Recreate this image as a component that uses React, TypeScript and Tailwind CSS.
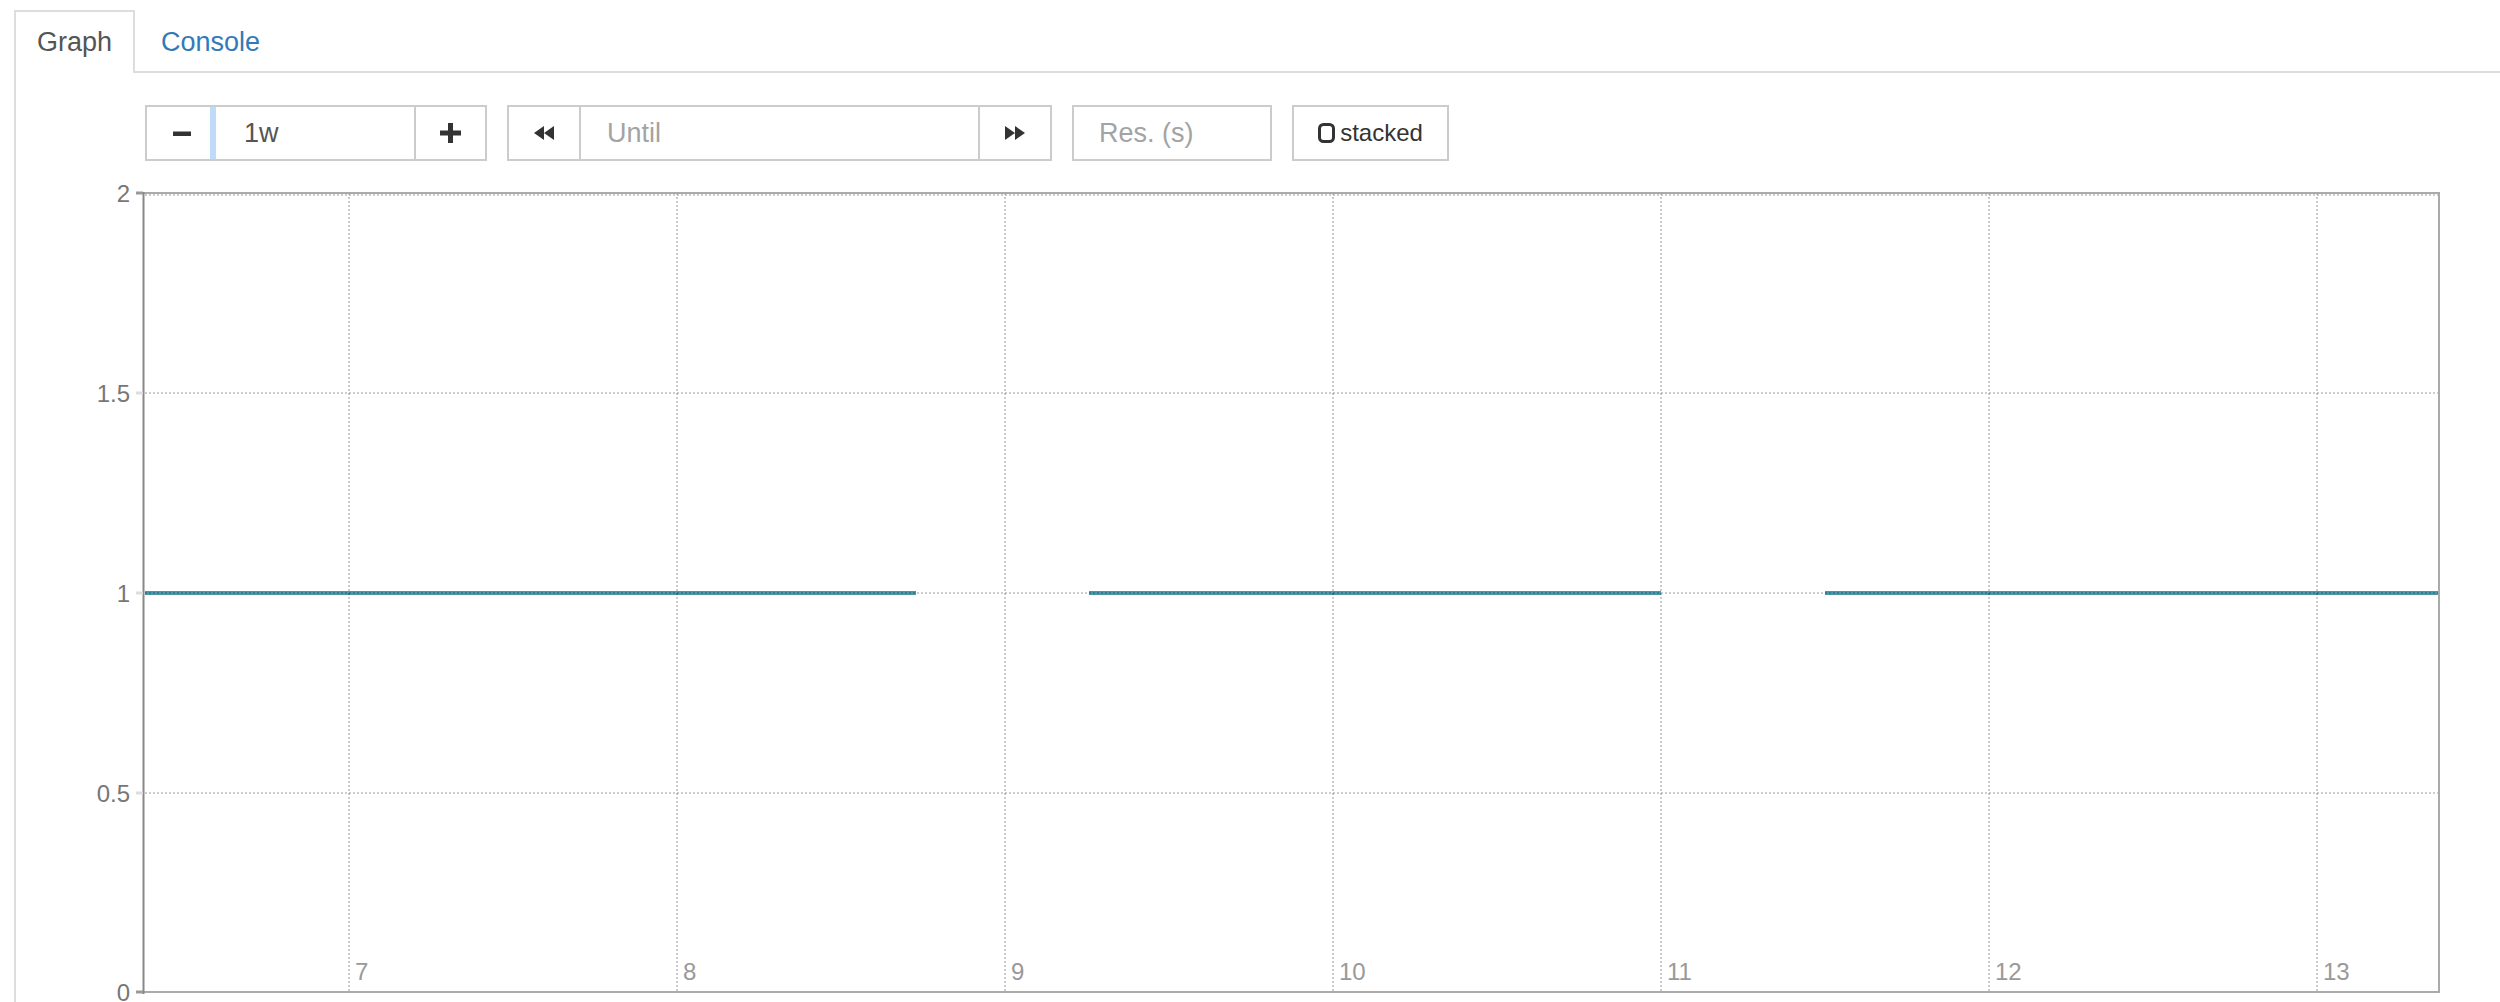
import React from "react";

const GRID_X = [351, 679, 1007, 1335, 1663, 1991, 2319];
const X_LABELS = ["7", "8", "9", "10", "11", "12", "13"];
const Y_TICKS: { y: number; label: string; strong: boolean }[] = [
  { y: 193, label: "2", strong: true },
  { y: 393, label: "1.5", strong: false },
  { y: 593, label: "1", strong: false },
  { y: 793, label: "0.5", strong: false },
  { y: 992, label: "0", strong: true },
];
const SEGMENTS: [number, number][] = [
  [147, 918],
  [1091, 1663],
  [1827, 2440],
];

function MinusIcon() {
  return (
    <svg width="18" height="5" viewBox="0 0 18 5">
      <rect x="0" y="0.5" width="18" height="4.5" fill="#333" />
    </svg>
  );
}

function PlusIcon() {
  return (
    <svg width="21" height="20" viewBox="0 0 21 20">
      <rect x="8" y="0" width="5" height="20" fill="#333" />
      <rect x="0" y="7.5" width="21" height="5" fill="#333" />
    </svg>
  );
}

function BackwardIcon() {
  return (
    <svg width="20" height="14" viewBox="0 0 20 14">
      <polygon points="0,7 10,0 10,14" fill="#333" />
      <polygon points="10,7 20,0 20,14" fill="#333" />
    </svg>
  );
}

function ForwardIcon() {
  return (
    <svg width="20" height="14" viewBox="0 0 20 14">
      <polygon points="0,0 10,7 0,14" fill="#333" />
      <polygon points="10,0 20,7 10,14" fill="#333" />
    </svg>
  );
}

function UncheckedIcon() {
  return (
    <svg width="17" height="20" viewBox="0 0 17 20">
      <rect x="1.5" y="1.5" width="14" height="17" rx="4" ry="4" fill="none" stroke="#333" strokeWidth="3" />
    </svg>
  );
}

function Chart() {
  const grid = "rgba(0,0,0,0.2)";
  return (
    <svg width="2484" height="822" viewBox="16 180 2484 822" className="block">
      {SEGMENTS.map(([a, b], i) => (
        <line key={i} x1={a} y1={593} x2={b} y2={593} stroke="#4c98aa" strokeWidth="4" />
      ))}
      {[195, 393, 593, 793].map((y) => (
        <line key={y} x1={147} y1={y} x2={2440} y2={y} stroke={grid} strokeWidth="2" strokeDasharray="2 2" />
      ))}
      {GRID_X.map((x) => (
        <line key={x} x1={x} y1={193} x2={x} y2={992} stroke={grid} strokeWidth="2" strokeDasharray="2 2" />
      ))}
      <line x1={145} y1={193} x2={2442} y2={193} stroke="#aaa" strokeWidth="2" />
      <line x1={2441} y1={192} x2={2441} y2={993} stroke="#aaa" strokeWidth="2" />
      <line x1={145} y1={992} x2={2442} y2={992} stroke="#aaa" strokeWidth="2" />
      <line x1={145.5} y1={192} x2={145.5} y2={994} stroke="#888" strokeWidth="2" />
      {Y_TICKS.map((t) => (
        <g key={t.label}>
          <line x1={138} y1={t.y} x2={145} y2={t.y} stroke={t.strong ? "#999" : "#ddd"} strokeWidth="3" />
          <text
            x={132}
            y={t.y + 8.5}
            textAnchor="end"
            fontSize="24"
            fill="#777"
            fontFamily="'Liberation Sans', Arial, sans-serif"
          >
            {t.label}
          </text>
        </g>
      ))}
      {GRID_X.map((x, i) => (
        <text
          key={x}
          x={x + 6}
          y={980}
          fontSize="24"
          fill="#999"
          fontFamily="'Liberation Sans', Arial, sans-serif"
        >
          {X_LABELS[i]}
        </text>
      ))}
    </svg>
  );
}

export default function App() {
  return (
    <div className="w-[2500px] h-[1002px] overflow-hidden bg-white pt-[10px] pl-[14px] font-['Liberation_Sans',Arial,sans-serif]">
      <div className="border-l-2 border-[#ddd] h-[992px] flex flex-col">
        <div className="flex h-[63px] shrink-0">
          <div className="h-full border-t-2 border-r-2 border-[#ddd] px-[21px] flex items-center text-[27px] leading-none text-[#555]">
            Graph
          </div>
          <div className="flex-1 h-full border-b-2 border-[#ddd] flex items-center pl-[26px] pt-[4px] text-[27px] leading-none text-[#337ab7]">
            Console
          </div>
        </div>

        <div className="mt-[32px] ml-[129px] flex gap-[20px] h-[56px] shrink-0">
          <div className="flex w-[342px] h-full border-2 border-[#ccc]">
            <div className="w-[63px] h-full flex items-center justify-center pl-[6px]">
              <MinusIcon />
            </div>
            <div className="w-[6px] h-full bg-[#bedcf6]" />
            <input
              readOnly
              value="1w"
              className="w-[198px] h-full pl-[28px] text-[27px] text-[#555] bg-transparent outline-none"
            />
            <div className="w-[71px] h-full border-l-2 border-[#ccc] flex items-center justify-center">
              <PlusIcon />
            </div>
          </div>

          <div className="flex w-[545px] h-full border-2 border-[#ccc]">
            <div className="w-[72px] h-full border-r-2 border-[#ccc] flex items-center justify-center">
              <BackwardIcon />
            </div>
            <input
              readOnly
              placeholder="Until"
              className="w-[397px] h-full pl-[26px] text-[27px] text-[#555] placeholder:text-[#a3a3a3] bg-transparent outline-none"
            />
            <div className="w-[72px] h-full border-l-2 border-[#ccc] flex items-center justify-center">
              <ForwardIcon />
            </div>
          </div>

          <input
            readOnly
            placeholder="Res. (s)"
            className="w-[200px] h-full border-2 border-[#ccc] pl-[25px] text-[27px] text-[#555] placeholder:text-[#a3a3a3] bg-white outline-none"
          />

          <div className="w-[157px] h-full border-2 border-[#ccc] flex items-center justify-center gap-[5px] text-[24px] text-[#333]">
            <UncheckedIcon />
            <span className="leading-none">stacked</span>
          </div>
        </div>

        <div className="mt-[19px] -ml-[2px]">
          <Chart />
        </div>
      </div>
    </div>
  );
}
